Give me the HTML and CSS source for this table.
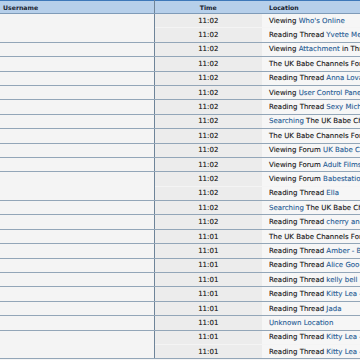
FILE: index.html
```html
<!DOCTYPE html>
<html lang="en">
<head>
    <meta charset="UTF-8">
    <title>Who's Online</title>
    <link rel="stylesheet" href="styles.css">
</head>
<body>
    <table class="online">
        <colgroup>
            <col class="col-user">
            <col class="col-time">
            <col class="col-loc">
        </colgroup>
        <thead>
            <tr>
                <th class="user">Username</th>
                <th class="time">Time</th>
                <th class="loc">Location</th>
            </tr>
        </thead>
        <tbody>
            <tr class="nb"><td class="user"></td><td class="time">11:02</td><td class="loc">Viewing <a href="#">Who's Online</a></td></tr>
            <tr><td class="user"></td><td class="time">11:02</td><td class="loc">Reading Thread <a href="#">Yvette Mendoza</a></td></tr>
            <tr><td class="user"></td><td class="time">11:02</td><td class="loc">Viewing <a href="#">Attachment</a> in Thread</td></tr>
            <tr><td class="user"></td><td class="time">11:02</td><td class="loc">The UK Babe Channels Forum</td></tr>
            <tr><td class="user"></td><td class="time">11:02</td><td class="loc">Reading Thread <a href="#">Anna Lovato</a></td></tr>
            <tr><td class="user"></td><td class="time">11:02</td><td class="loc">Viewing <a href="#">User Control Panel</a></td></tr>
            <tr><td class="user"></td><td class="time">11:02</td><td class="loc">Reading Thread <a href="#">Sexy Michelle</a></td></tr>
            <tr><td class="user"></td><td class="time">11:02</td><td class="loc"><a href="#">Searching</a> The UK Babe Channels</td></tr>
            <tr><td class="user"></td><td class="time">11:02</td><td class="loc">The UK Babe Channels Forum</td></tr>
            <tr><td class="user"></td><td class="time">11:02</td><td class="loc">Viewing Forum <a href="#">UK Babe Channels</a></td></tr>
            <tr><td class="user"></td><td class="time">11:02</td><td class="loc">Viewing Forum <a href="#">Adult Films</a></td></tr>
            <tr class="nb"><td class="user"></td><td class="time">11:02</td><td class="loc">Viewing Forum <a href="#">Babestation</a></td></tr>
            <tr><td class="user"></td><td class="time">11:02</td><td class="loc">Reading Thread <a href="#">Ella</a></td></tr>
            <tr><td class="user"></td><td class="time">11:02</td><td class="loc"><a href="#">Searching</a> The UK Babe Channels</td></tr>
            <tr><td class="user"></td><td class="time">11:02</td><td class="loc">Reading Thread <a href="#">cherry and</a></td></tr>
            <tr><td class="user"></td><td class="time">11:01</td><td class="loc">The UK Babe Channels Forum</td></tr>
            <tr><td class="user"></td><td class="time">11:01</td><td class="loc">Reading Thread <a href="#">Amber - Babe</a></td></tr>
            <tr><td class="user"></td><td class="time">11:01</td><td class="loc">Reading Thread <a href="#">Alice Goodwin</a></td></tr>
            <tr><td class="user"></td><td class="time">11:01</td><td class="loc">Reading Thread <a href="#">kelly bell</a></td></tr>
            <tr><td class="user"></td><td class="time">11:01</td><td class="loc">Reading Thread <a href="#">Kitty Lea - Babe</a></td></tr>
            <tr><td class="user"></td><td class="time">11:01</td><td class="loc">Reading Thread <a href="#">Jada</a></td></tr>
            <tr><td class="user"></td><td class="time">11:01</td><td class="loc"><a href="#">Unknown Location</a></td></tr>
            <tr class="nb"><td class="user"></td><td class="time">11:01</td><td class="loc">Reading Thread <a href="#">Kitty Lea - Babe</a></td></tr>
            <tr><td class="user"></td><td class="time">11:01</td><td class="loc">Reading Thread <a href="#">Kitty Lea - Babe</a></td></tr>
        </tbody>
    </table>
</body>
</html>
```

FILE: styles.css
```css
body {
    margin: 0;
    overflow: hidden;
    background: #f4f4f4;
    font-family: "DejaVu Sans", Verdana, sans-serif;
    font-size: 7px;
    color: #111;
}
.online {
    width: 520px;
    table-layout: fixed;
    border-collapse: collapse;
}
.col-user {
    width: 154px;
}
.col-time {
    width: 108px;
}
.online th {
    height: 12px;
    padding: 0 3px;
    background: #b6cfea;
    border-top: 1px solid #3e78b9;
    border-bottom: 1px solid #7f9bb8;
    font-size: 6.2px;
    font-weight: bold;
    color: #17222f;
    text-align: left;
    white-space: nowrap;
}
.online th.time {
    text-align: center;
}
.online th.loc {
    padding-left: 7px;
}
.online td {
    height: 13.4px;
    padding: 0 3px;
    border-bottom: 1px solid #93a6b8;
    white-space: nowrap;
    overflow: hidden;
    -webkit-text-stroke: 0.1px currentColor;
}
.online tr.nb td {
    border-bottom-color: transparent;
}
.online .user {
    border-right: 1px solid #6e8499;
}
.online td.user {
    background: #f4f4f4;
}
.online td.time {
    background: #ececec;
    text-align: center;
}
.online td.loc {
    background: #f6f6f6;
    padding-left: 7px;
}
.online a {
    color: #245a94;
    text-decoration: none;
}
```
